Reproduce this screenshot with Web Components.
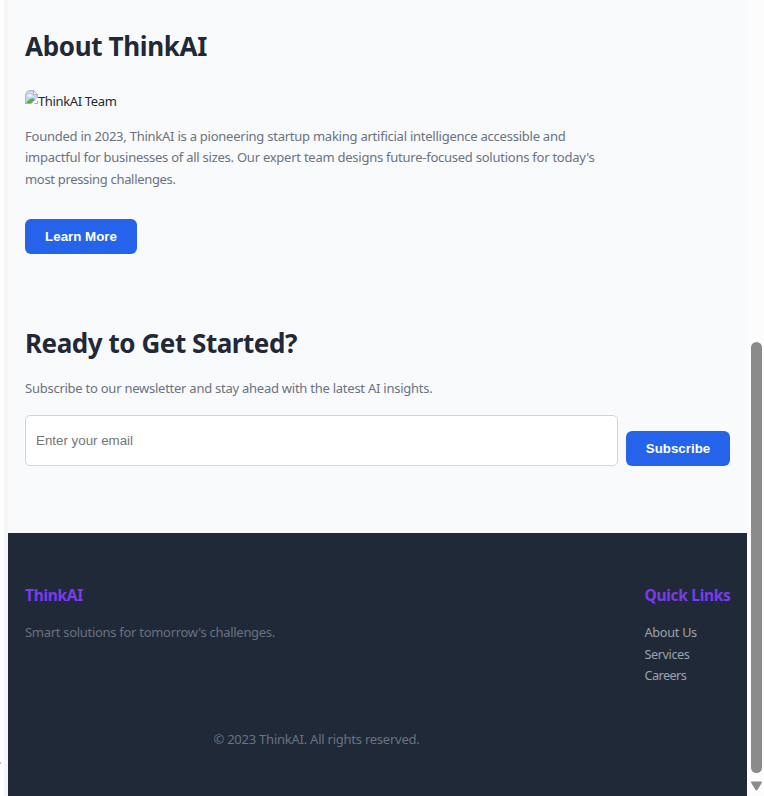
<!DOCTYPE html>
<html lang="en"><head><meta charset="utf-8"><title>ThinkAI</title>
<style>
html,body{margin:0;height:100%;overflow:hidden}
body{background:#fdfdfd;font-family:"Noto Sans","Open Sans",sans-serif;font-size:13px;color:#1f2937}
</style></head><body>
<page-frame>
  <about-section></about-section>
  <signup-section></signup-section>
  <site-footer></site-footer>
</page-frame>
<script>
const define = (name, html) => customElements.define(name, class extends HTMLElement {
  constructor() {
    super();
    const t = document.createElement('template');
    t.innerHTML = html;
    this.attachShadow({mode: 'open'}).append(t.content.cloneNode(true));
  }
});

/* one unwrapped line of text; --ls sets its tracking */
define('text-line', `<style>:host{display:block;line-height:21.5px;white-space:nowrap;letter-spacing:var(--ls,-.24px)}</style><slot></slot>`);

define('section-title', `<style>:host{display:block}h2{margin:0;font-size:26px;font-weight:700;line-height:42px;white-space:nowrap;letter-spacing:var(--ls,-.4px)}</style><h2><slot></slot></h2>`);

define('action-button', `<style>:host{display:block;flex:none}button{display:block;box-sizing:border-box;width:100%;height:35px;margin:0;padding:0;border:0;border-radius:6px;background:#2563eb;color:#fff;font:700 13.33px "Liberation Sans",sans-serif}</style><button><slot></slot></button>`);

define('missing-image', `<style>
:host{display:flex;height:22px;align-items:flex-start}
svg{display:block;flex:none;width:13px;height:15px}
text-line,::slotted(*){margin-top:1px}
</style>
<svg viewBox="0 0 13 15"><path d="M0 6Q0 0 6 0H8.500L12.500 4V9L6.500 14H0Z" fill="#c6d5f6"/><path d="M.5 13.500V5.500Q1 .5 6 .5H8.500" fill="none" stroke="#b4b8c0"/><path d="M8.500 .5V4.500H12.500Z" fill="#fff" stroke="#a2a6ae" stroke-width=".8"/><path d="M2.500 6.500Q2.500 5 4 5Q5 3.500 6 5Q7.500 5 7.500 6.500Z" fill="#fff"/><path d="M1 13.500Q3.500 8.500 8 8.200L10 9.500L6 13.500Z" fill="#52b33a"/><path d="M6 14.500L13 7.500V10.500L9 14.500Z" fill="#f9fafc"/><path d="M0 13.500H6M9.500 13.500H12.500V11M12.500 4.500V7.500" fill="none" stroke="#a9adb5"/></svg>
<slot></slot>`);

define('about-section', `<style>
:host{display:block;padding:25px 17px 0;height:287px;box-sizing:border-box}
missing-image{margin-top:23px}
.copy{color:#6b7280;margin-top:13.500px}
action-button{width:112px;margin-top:29px}
</style>
<section-title style="--ls:-.34px">About ThinkAI</section-title>
<missing-image><text-line style="--ls:-.36px">ThinkAI Team</text-line></missing-image>
<div class="copy">
<text-line style="--ls:-.242px">Founded in 2023, ThinkAI is a pioneering startup making artificial intelligence accessible and</text-line>
<text-line style="--ls:-.248px">impactful for businesses of all sizes. Our expert team designs future-focused solutions for today's</text-line>
<text-line style="--ls:-.32px">most pressing challenges.</text-line>
</div>
<action-button>Learn More</action-button>`);

define('signup-section', `<style>
:host{display:block;padding:35px 17px 0;height:246px;box-sizing:border-box}
.note{color:#6b7280;margin-top:14px}
.row{display:flex;align-items:flex-end;gap:8px;margin-top:15.500px}
input{flex:1;min-width:0;box-sizing:border-box;height:51px;margin:0;padding:0 10px;border:1px solid #d1d5db;border-radius:5px;background:#fff;font:13.33px "Liberation Sans",sans-serif}
input::placeholder{color:#757575;opacity:1}
action-button{width:104px}
</style>
<section-title style="--ls:-.45px">Ready to Get Started?</section-title>
<text-line class="note" style="--ls:-.25px">Subscribe to our newsletter and stay ahead with the latest AI insights.</text-line>
<div class="row"><input type="email" placeholder="Enter your email"><action-button>Subscribe</action-button></div>`);

define('footer-column', `<style>:host{display:block}h3{margin:0 0 14px;font-size:15.500px;line-height:25px;color:#7c3aed;letter-spacing:-.3px;white-space:nowrap}</style><h3><slot name="title"></slot></h3><slot></slot>`);

define('site-footer', `<style>
:host{display:block;flex:1;background:#1f2937;color:#6b7280;padding:50px 17px 0}
.cols{display:flex;justify-content:space-between;height:146px}
.links{width:85.500px}
.links text-line{color:#9ca3af;font-size:12.700px}
.copyright{width:583px;text-align:center}
</style>
<div class="cols">
<footer-column><span slot="title">ThinkAI</span><text-line style="--ls:-.295px">Smart solutions for tomorrow's challenges.</text-line></footer-column>
<footer-column class="links"><span slot="title">Quick Links</span><text-line style="--ls:-.28px">About Us</text-line><text-line style="--ls:-.44px">Services</text-line><text-line style="--ls:-.58px">Careers</text-line></footer-column>
</div>
<text-line class="copyright">© 2023 ThinkAI. All rights reserved.</text-line>`);

define('scroll-bar', `<style>
:host{display:flex;flex-direction:column;justify-content:flex-end;align-items:center;width:17px;padding:0 0 5px 2px;box-sizing:border-box;background:#fcfcfc}
.thumb{width:11px;height:431px;border-radius:5.500px;background:#8b8b8b}
svg{display:block;width:13px;height:10px;margin-top:8px}
</style><div class="thumb"></div><svg viewBox="0 0 13 10"><path d="M1.300 1H11.700L7.300 8.500Q6.500 9.500 5.700 8.500Z" fill="#8b8b8b" stroke="#8b8b8b" stroke-linejoin="round"/></svg>`);

define('page-frame', `<style>
:host{display:flex;height:796px;width:764px}
.gutter{width:4px;flex:none;background:#fdfdfd;display:flex;flex-direction:column;justify-content:flex-end}
.gutter i{width:1px;height:2px;background:#b5b5b5;margin-bottom:12px}
.gutter b{height:20px;background:#fff}
.edge{width:4px;flex:none;background:#f5f5f5}
main{flex:1;display:flex;flex-direction:column;background:#f9fafc}
</style><div class="gutter"><i></i><b></b></div><div class="edge"></div><main><slot></slot></main><scroll-bar></scroll-bar>`);
</script>
</body></html>
